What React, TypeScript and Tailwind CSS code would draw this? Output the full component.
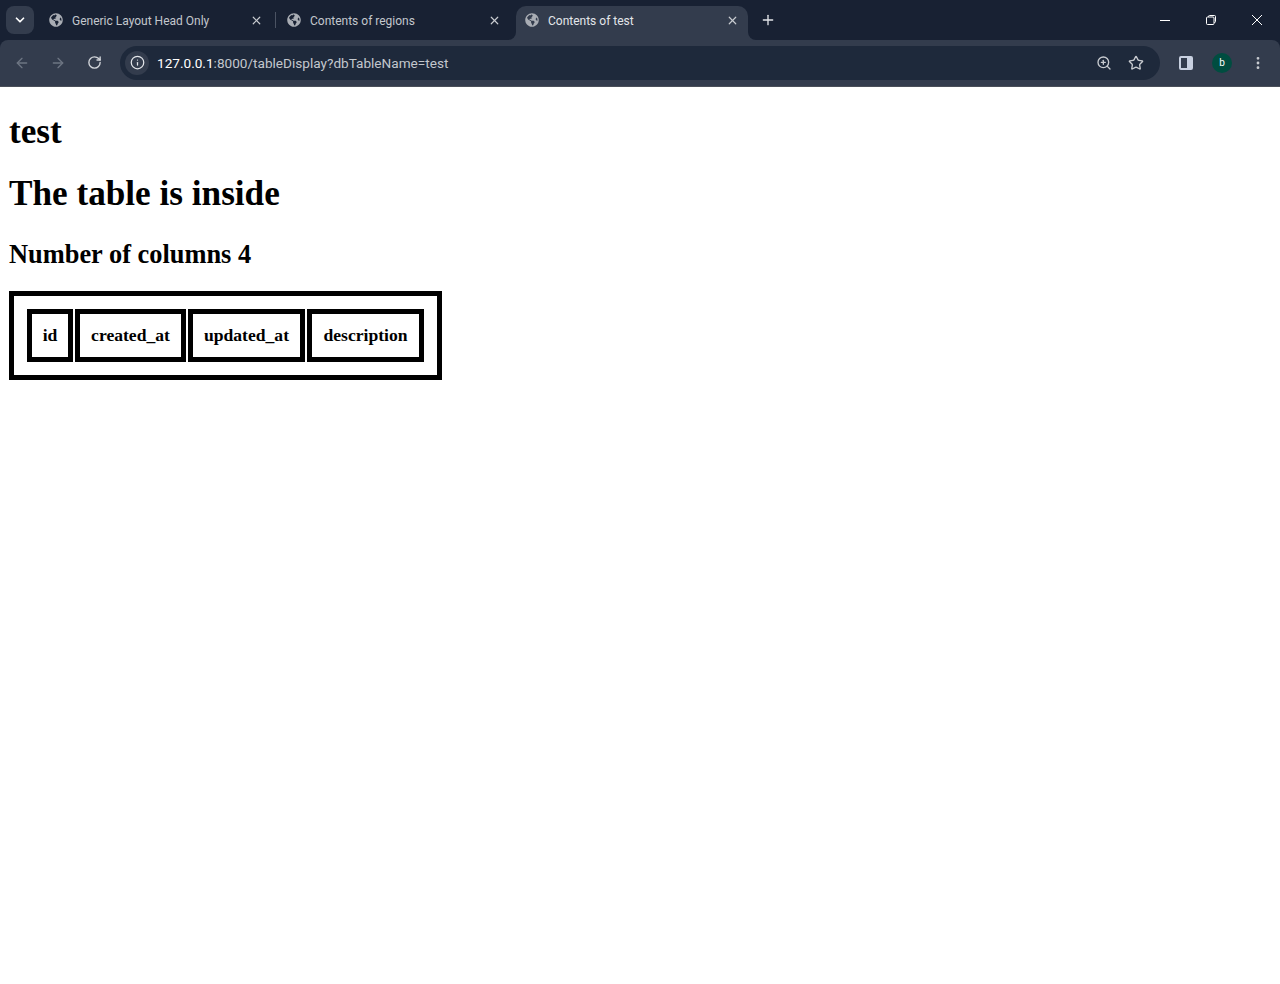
import React from 'react';
import { ArrowLeft, ArrowRight, RotateCw, Info, ZoomIn, Star, ChevronDown, X, Plus, MoreVertical } from 'lucide-react';
import { FaGlobeAmericas } from 'react-icons/fa';

type TabProps = { title: string; active?: boolean; divider?: boolean };

const Tab = ({ title, active, divider }: TabProps) => (
  <div className={`relative flex h-[34px] w-[232px] items-center pb-[6px] pl-[9px] pr-[9px] ${active ? 'rounded-t-[10px] bg-[#333c4d] text-[#e3e6ea]' : 'text-[#c3c7cd]'}`}>
    <FaGlobeAmericas className="h-[14px] w-[14px] shrink-0 text-[#a9adb4]" />
    <span className="ml-[9px] flex-1 truncate pt-[1px] text-[12px]">{title}</span>
    <X size={13} strokeWidth={2.2} className="shrink-0 text-[#c8cbd0]" />
    {divider && <div className="absolute right-[-4px] top-[6px] h-[16px] w-px bg-[#4b5363]" />}
    {active && (
      <>
        {/* Concave corners where the active tab meets the toolbar */}
        <div className="absolute bottom-0 left-[-8px] h-[8px] w-[8px] bg-[#333c4d]">
          <div className="h-full w-full rounded-br-[8px] bg-[#182133]" />
        </div>
        <div className="absolute bottom-0 right-[-8px] h-[8px] w-[8px] bg-[#333c4d]">
          <div className="h-full w-full rounded-bl-[8px] bg-[#182133]" />
        </div>
      </>
    )}
  </div>
);

export default function App() {
  return (
    <div className="min-h-[984px] bg-white font-['Liberation_Serif',serif] text-black">
      {/* Browser chrome */}
      <header className="font-['Roboto','Open_Sans',sans-serif]">
        <div className="flex h-[40px] items-end bg-[#182133] pl-[6px]">
          <div className="mb-[6px] mr-[6px] flex h-[28px] w-[28px] items-center justify-center rounded-[8px] bg-[#333c4d]">
            <ChevronDown size={14} strokeWidth={3} className="text-white" />
          </div>
          <div className="flex gap-[6px]">
            <Tab title="Generic Layout Head Only" divider />
            <Tab title="Contents of regions" />
            <Tab title="Contents of test" active />
          </div>
          <div className="mb-[6px] ml-[6px] flex h-[28px] w-[28px] items-center justify-center">
            <Plus size={16} strokeWidth={2} className="text-[#e3e6ea]" />
          </div>
          <div className="ml-auto flex h-full items-center text-white">
            <div className="flex w-[46px] justify-center">
              <svg viewBox="0 0 10 10" className="h-[10px] w-[10px]" stroke="currentColor" strokeWidth="1"><path d="M0 5.500h10" /></svg>
            </div>
            <div className="flex w-[46px] justify-center">
              <svg viewBox="0 0 12 12" className="h-[12px] w-[12px]" fill="none" stroke="currentColor" strokeWidth="1">
                <rect x="1.500" y="3" width="7.500" height="7.500" rx="1" />
                <path d="M3.500 3V2.500a1 1 0 0 1 1-1h5a1 1 0 0 1 1 1v5a1 1 0 0 1-1 1H9" />
              </svg>
            </div>
            <div className="flex w-[46px] justify-center">
              <svg viewBox="0 0 10 10" className="h-[10px] w-[10px]" stroke="currentColor" strokeWidth="1"><path d="M0 0l10 10M10 0L0 10" /></svg>
            </div>
          </div>
        </div>
        <div className="flex h-[47px] items-center bg-[#182133]">
          <div className="flex h-full w-full items-center rounded-t-[8px] border-b border-[#4a4f59] bg-[#333c4d] pb-[1px] pl-[4px]">
            <div className="flex w-[36px] justify-center"><ArrowLeft size={16} className="text-[#6d7583]" /></div>
            <div className="flex w-[36px] justify-center"><ArrowRight size={16} className="text-[#6d7583]" /></div>
            <div className="flex w-[36px] justify-center"><RotateCw size={15} strokeWidth={2.2} className="text-[#d2d5da]" /></div>
            <div className="ml-[8px] flex h-[34px] w-[1040px] items-center rounded-full bg-[#1e293b] pl-[5px] pr-[16px]">
              <div className="flex h-[24px] w-[24px] items-center justify-center rounded-full bg-[#333c4d]">
                <Info size={15} strokeWidth={2} className="text-[#e3e6ea]" />
              </div>
              <span className="ml-[8px] flex-1 pt-[1px] text-[13.600px] text-[#c3c7cd]"><span className="text-white">127.0.0.1</span>:8000/tableDisplay?dbTableName=test</span>
              <ZoomIn size={16} strokeWidth={2} className="text-[#c8cbd0]" />
              <Star size={16} strokeWidth={2} className="ml-[16px] text-[#c8cbd0]" />
            </div>
            <div className="ml-[18px] flex w-[16px] justify-center">
              <div className="flex h-[14px] w-[14px] rounded-[2px] border-2 border-[#c8d0e0] bg-[#c8d0e0]">
                <div className="h-full w-[6px] bg-[#333c4d]" />
              </div>
            </div>
            <div className="ml-[18px] flex h-[20px] w-[20px] items-center justify-center rounded-full bg-[#004d40] text-[10px] text-white">b</div>
            <MoreVertical size={16} strokeWidth={2.2} className="ml-[18px] text-[#c8cbd0]" />
          </div>
        </div>
      </header>

      {/* Page */}
      <main className="flex flex-col items-start px-[9px]">
        <h1 className="mt-[25px] text-[35.200px] font-bold leading-[40px]">test</h1>
        <h1 className="mt-[22px] text-[35.200px] font-bold leading-[40px]">The table is inside</h1>
        <h2 className="mt-[25px] text-[26.400px] font-bold leading-[30px]">Number of columns 4</h2>
        <div className="mt-[22px] flex gap-[2px] border-[5px] border-black p-[13px]">
          {[
            ['id', 'w-[46px]'],
            ['created_at', 'w-[111px]'],
            ['updated_at', 'w-[117px]'],
            ['description', 'w-[117px]'],
          ].map(([name, width]) => (
            <div key={name} className={`flex h-[53px] items-center justify-center border-[5px] border-black text-[17.600px] font-bold ${width}`}>
              {name}
            </div>
          ))}
        </div>
      </main>
    </div>
  );
}
